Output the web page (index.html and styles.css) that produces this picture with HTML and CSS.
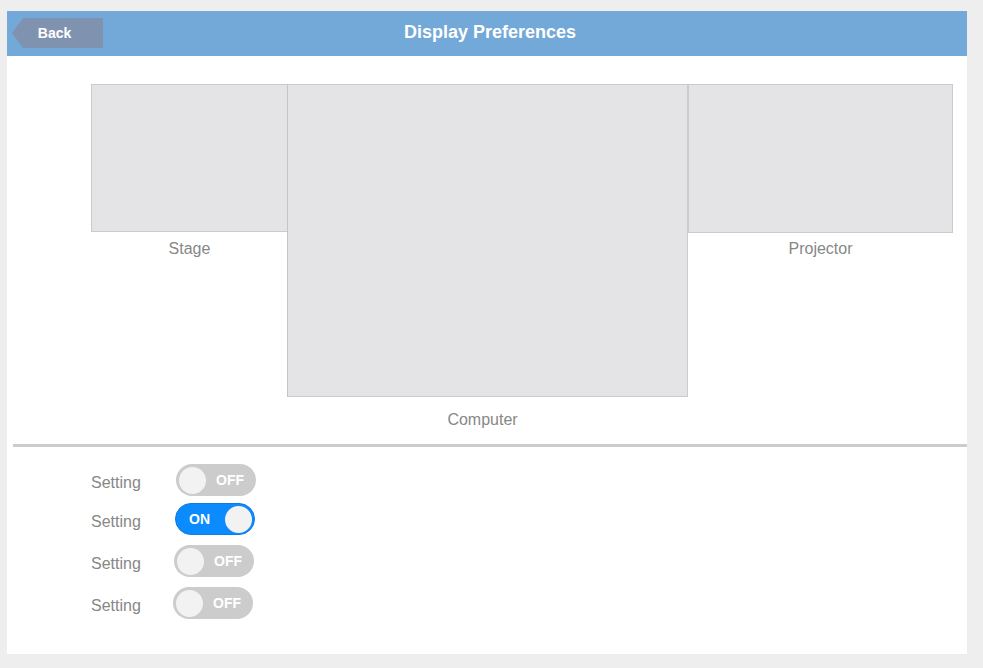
FILE: index.html
```html
<!DOCTYPE html>
<html>
<head>
<meta charset="utf-8">
<link rel="stylesheet" href="styles.css">
</head>
<body>
<div class="panel">
  <header class="header">
    <div class="back-wrap"><button class="back">Back</button></div>
    <h1 class="title">Display Preferences</h1>
    <div></div>
  </header>
  <section class="displays">
    <div class="display stage">
      <div class="screen"></div>
      <div class="label">Stage</div>
    </div>
    <div class="display computer">
      <div class="screen"></div>
      <div class="label">Computer</div>
    </div>
    <div class="display projector">
      <div class="screen"></div>
      <div class="label">Projector</div>
    </div>
  </section>
  <div class="divider"></div>
  <section class="settings">
    <div class="row r1"><span class="name">Setting</span><div class="toggle off"><span class="knob"></span><span class="txt">OFF</span></div></div>
    <div class="row r2"><span class="name">Setting</span><div class="toggle on"><span class="txt">ON</span><span class="knob"></span></div></div>
    <div class="row r3"><span class="name">Setting</span><div class="toggle off"><span class="knob"></span><span class="txt">OFF</span></div></div>
    <div class="row r4"><span class="name">Setting</span><div class="toggle off"><span class="knob"></span><span class="txt">OFF</span></div></div>
  </section>
</div>
</body>
</html>
```
FILE: styles.css
```css
* { box-sizing: border-box; }
body {
  margin: 0;
  background: #eeeeee;
  font-family: "Liberation Sans", Arial, sans-serif;
}
.panel {
  margin: 11px 0 0 7px;
  width: 960px;
  height: 643px;
  background: #ffffff;
}
.header {
  height: 45px;
  background: #73a9d8;
  display: grid;
  grid-template-columns: 1fr auto 1fr;
  align-items: start;
}
.back-wrap { padding: 7px 0 0 5px; }
.back {
  display: block;
  width: 91px;
  height: 30px;
  border: 0;
  padding: 0 6px 0 0;
  background: #7f93b0;
  color: #ffffff;
  font: bold 14px "Liberation Sans", Arial, sans-serif;
  clip-path: polygon(11px 0, 100% 0, 100% 100%, 11px 100%, 0 50%);
}
.title {
  margin: 0;
  padding-top: 11px;
  padding-left: 6px;
  color: #ffffff;
  font-size: 18px;
  font-weight: bold;
  line-height: 20px;
}
.displays {
  display: flex;
  align-items: flex-start;
  padding: 28px 0 0 84px;
}
.display {
  display: flex;
  flex-direction: column;
  align-items: center;
}
.screen {
  background: #e4e4e6;
  border: 1px solid #cbcbcf;
}
.stage .screen { width: 197px; height: 148px; }
.computer .screen { width: 401px; height: 313px; border-left-color: #c4c4c8; }
.projector .screen { width: 265px; height: 149px; }
.label {
  color: #878787;
  font-size: 16px;
  line-height: 18px;
  margin-top: 8px;
}
.projector .label { margin-top: 7px; }
.computer .label { margin-top: 14px; padding-right: 10px; }
.stage { margin-right: -1px; }
.divider {
  margin: 15px 0 0 6px;
  height: 3px;
  background: #cccccc;
}
.settings {
  padding: 17px 0 0 84px;
  display: flex;
  flex-direction: column;
  gap: 10px;
}
.row {
  display: flex;
  align-items: center;
}
.r1 { margin-bottom: -3px; }
.name {
  width: 85px;
  color: #878787;
  font-size: 16px;
  line-height: 18px;
  padding-top: 5px;
}
.r2 .name { width: 84px; }
.r3 .name { width: 83px; }
.r4 .name { width: 82px; }
.toggle {
  width: 80px;
  height: 32px;
  border-radius: 16px;
  display: flex;
  align-items: center;
  padding: 0 3px;
  color: #ffffff;
  font-weight: bold;
  font-size: 14px;
}
.toggle.off { background: #cccccc; }
.toggle.on { background: #0b8bfd; border: 1px solid #0a7de6; padding: 0 2px 0 13px; justify-content: space-between; }
.knob {
  width: 27px;
  height: 27px;
  border-radius: 50%;
  background: #f2f2f2;
}
.toggle.off .txt { margin-left: 10px; }
```
